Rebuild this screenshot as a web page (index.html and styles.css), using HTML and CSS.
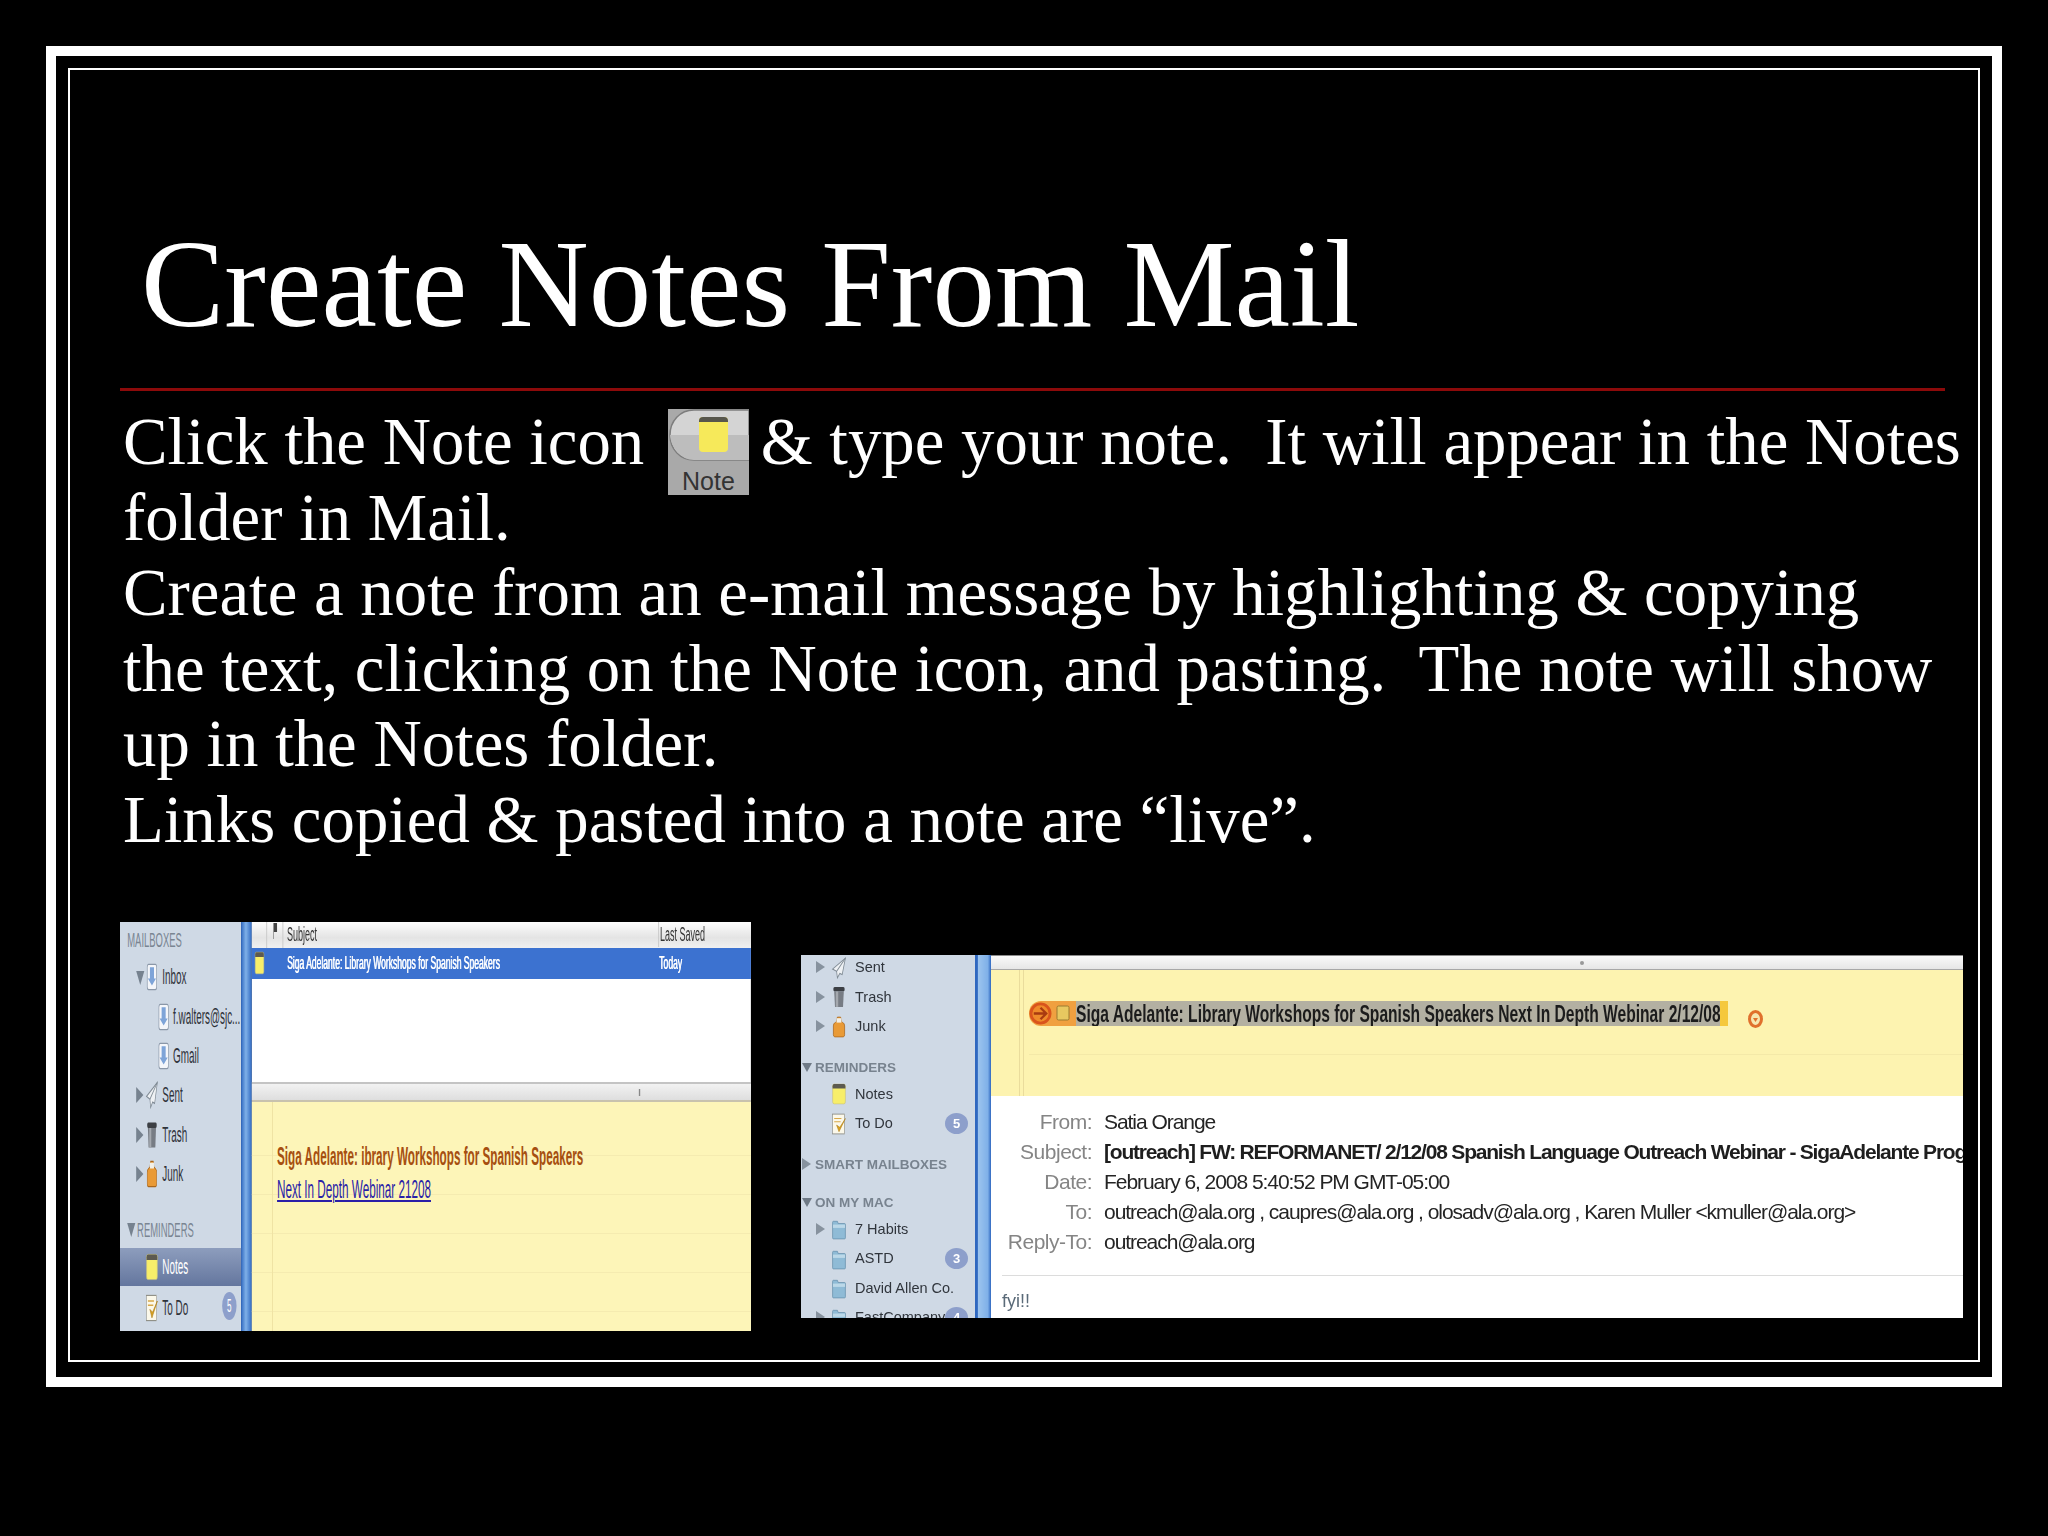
FILE: index.html
```html
<!DOCTYPE html>
<html lang="en">
<head>
    <meta charset="UTF-8">
    <title>Create Notes From Mail</title>
    <link rel="stylesheet" href="styles.css">
</head>
<body>
    <!-- Shared mail sidebar icons -->
    <svg class="icon-defs" aria-hidden="true">
        <defs>
            <symbol id="i-mail" viewBox="0 0 20 20" preserveAspectRatio="none">
                <rect x="3" y="1" width="14" height="18" rx="2" fill="#f4f6fa" stroke="#8a97a8"/>
                <path d="M7 3h6v8h3l-6 5-6-5h3z" fill="#7ea4d8"/>
            </symbol>
            <symbol id="i-sent" viewBox="0 0 20 20" preserveAspectRatio="none">
                <path d="M18 1 2 11l5 2 1 6 3-4 3 1z" fill="#eef1f4" stroke="#7f8a94" stroke-width="1"/>
                <path d="M18 1 7 13" stroke="#7f8a94" fill="none"/>
            </symbol>
            <symbol id="i-trash" viewBox="0 0 20 20" preserveAspectRatio="none">
                <rect x="3" y="1" width="14" height="4" rx="1.5" fill="#3c3f44"/>
                <path d="M4 5h12l-1 14H5z" fill="#777c84"/>
                <path d="M6 5v14h3V5z" fill="#a4a8ae"/>
            </symbol>
            <symbol id="i-junk" viewBox="0 0 20 20" preserveAspectRatio="none">
                <path d="M3 9c0-3 3-3 4-4l1-4h4l1 4c1 1 4 1 4 4v8c0 2-2 2-2 2H5s-2 0-2-2z" fill="#e99a36" stroke="#a9661c" stroke-width=".8"/>
                <path d="M7 2h6v4H7z" fill="#f2f0e8"/>
            </symbol>
            <symbol id="i-note" viewBox="0 0 20 20" preserveAspectRatio="none">
                <rect x="2" y="1" width="16" height="18" rx="2" fill="#f7ee6a" stroke="#c4bd82" stroke-width=".6"/>
                <path d="M2 3a2 2 0 0 1 2-2h12a2 2 0 0 1 2 2v2H2z" fill="#5c5a50"/>
            </symbol>
            <symbol id="i-todo" viewBox="0 0 20 20" preserveAspectRatio="none">
                <rect x="2" y="1" width="15" height="18" fill="#fbf8ea" stroke="#8d8d85" stroke-width=".8"/>
                <path d="M4 5h9M4 8h8" stroke="#d8a84a"/>
                <path d="M7 11l3 6 8-12-7 8z" fill="#d9a21f" stroke="#b0801a" stroke-width=".6"/>
            </symbol>
            <symbol id="i-folder" viewBox="0 0 20 20" preserveAspectRatio="none">
                <path d="M2 4a1 1 0 0 1 1-1h5l1 2h8a1 1 0 0 1 1 1v12a1 1 0 0 1-1 1H3a1 1 0 0 1-1-1z" fill="#8fbbd6" stroke="#5f8aa6" stroke-width=".7"/>
                <path d="M2.500 6h15v3h-15z" fill="#bcd8e8"/>
            </symbol>
        </defs>
    </svg>

    <div class="frame">
        <div class="frame-inner">
            <h1 class="title">Create Notes From Mail</h1>
            <div class="rule"></div>

            <p class="body-text">Click the Note icon <span class="note-btn"><svg class="note-btn-art" viewBox="0 0 81 54"><path d="M81 1H26C12 1 2 12 2 26s10 25 24 25h55z" fill="#d4d4d4" stroke="#7d7d7d" stroke-width="1.5"/><path d="M81 26H2c1 13 11 25 24 25h55z" fill="#bdbdbd"/><rect x="31" y="8" width="29" height="35" rx="4" fill="#f6e95a"/><path d="M31 12a4 4 0 0 1 4-4h21a4 4 0 0 1 4 4v1H31z" fill="#57564c"/></svg><span class="note-btn-label">Note</span></span> &amp; type your note.  It will appear in the Notes
folder in Mail.
Create a note from an e-mail message by highlighting &amp; copying
the text, clicking on the Note icon, and pasting.  The note will show
up in the Notes folder.
Links copied &amp; pasted into a note are “live”.</p>

            <div class="shots">
                <!-- Left capture, squeezed sideways like the original -->
                <div class="shot shot-a">
                    <div class="shot-a-inner">
                        <div class="side-a">
                            <div class="sec-a first">MAILBOXES</div>
                            <div class="row-a"><i class="tri-a open"></i><svg class="ico-a"><use href="#i-mail"/></svg>Inbox</div>
                            <div class="row-a sub"><svg class="ico-a"><use href="#i-mail"/></svg>f.walters@sjc...</div>
                            <div class="row-a sub"><svg class="ico-a"><use href="#i-mail"/></svg>Gmail</div>
                            <div class="row-a"><i class="tri-a"></i><svg class="ico-a"><use href="#i-sent"/></svg>Sent</div>
                            <div class="row-a"><i class="tri-a"></i><svg class="ico-a"><use href="#i-trash"/></svg>Trash</div>
                            <div class="row-a"><i class="tri-a"></i><svg class="ico-a"><use href="#i-junk"/></svg>Junk</div>
                            <div class="sec-a"><i class="tri-a open head"></i>REMINDERS</div>
                            <div class="row-a selected"><svg class="ico-a"><use href="#i-note"/></svg>Notes</div>
                            <div class="row-a"><svg class="ico-a"><use href="#i-todo"/></svg>To Do<span class="badge-a">5</span></div>
                        </div>
                        <div class="splitter-a"></div>
                        <div class="main-a">
                            <div class="list-head">
                                <span class="col-flag"><svg class="flag" viewBox="0 0 10 16"><path d="M1 0h8v9H2v7H1z" fill="#444"/></svg></span>
                                <span class="col-subject">Subject</span>
                                <span class="col-saved">Last Saved</span>
                            </div>
                            <div class="list-row">
                                <svg class="list-note"><use href="#i-note"/></svg>
                                <span class="col-subject">Siga Adelante: Library Workshops for Spanish Speakers</span>
                                <span class="col-saved">Today</span>
                            </div>
                            <div class="list-empty"></div>
                            <div class="divider-a"><i class="dimple"></i></div>
                            <div class="note-a">
                                <div class="note-a-title">Siga Adelante: ibrary Workshops for Spanish Speakers</div>
                                <a class="note-a-link">Next In Depth Webinar 21208</a>
                            </div>
                        </div>
                    </div>
                </div>

                <!-- Right capture -->
                <div class="shot shot-b">
                    <div class="side-b">
                        <div class="row-b"><i class="tri-b"></i><svg class="ico-b"><use href="#i-sent"/></svg>Sent</div>
                        <div class="row-b"><i class="tri-b"></i><svg class="ico-b"><use href="#i-trash"/></svg>Trash</div>
                        <div class="row-b"><i class="tri-b"></i><svg class="ico-b"><use href="#i-junk"/></svg>Junk</div>
                        <div class="sec-b gap"><i class="tri-b open"></i>REMINDERS</div>
                        <div class="row-b"><svg class="ico-b"><use href="#i-note"/></svg>Notes</div>
                        <div class="row-b"><svg class="ico-b"><use href="#i-todo"/></svg>To Do<span class="badge-b">5</span></div>
                        <div class="sec-b gap"><i class="tri-b"></i>SMART MAILBOXES</div>
                        <div class="sec-b gap-small"><i class="tri-b open"></i>ON MY MAC</div>
                        <div class="row-b"><i class="tri-b"></i><svg class="ico-b"><use href="#i-folder"/></svg>7 Habits</div>
                        <div class="row-b"><svg class="ico-b"><use href="#i-folder"/></svg>ASTD<span class="badge-b">3</span></div>
                        <div class="row-b"><svg class="ico-b"><use href="#i-folder"/></svg>David Allen Co.</div>
                        <div class="row-b"><i class="tri-b"></i><svg class="ico-b"><use href="#i-folder"/></svg>FastCompany<span class="badge-b">4</span></div>
                    </div>
                    <div class="splitter-b"></div>
                    <div class="main-b">
                        <div class="bar-b"><i class="dimple-b"></i></div>
                        <div class="note-b">
                            <div class="banner">
                                <span class="banner-lead">
                                    <svg class="banner-arrow" viewBox="0 0 24 24"><circle cx="12" cy="12" r="10" fill="#ef8a2a" stroke="#d9541c" stroke-width="3"/><path d="M5 12h12M12 6l6 6-6 6" fill="none" stroke="#a83a10" stroke-width="2.4"/></svg>
                                    <svg class="banner-note" viewBox="0 0 14 16"><rect x="1" y="1" width="12" height="14" rx="1.5" fill="#e8c860" stroke="#9a7a30"/></svg>
                                </span>
                                <span class="banner-text"><span class="banner-squeeze">Siga Adelante: Library Workshops for Spanish Speakers Next In Depth Webinar 2/12/08</span></span>
                                <i class="banner-tail"></i>
                            </div>
                            <svg class="banner-end" viewBox="0 0 15 18"><ellipse cx="7.500" cy="9" rx="6" ry="7.500" fill="#f6e7b0" stroke="#e0702c" stroke-width="3"/><path d="M5 8h5l-2.500 4z" fill="#e0702c"/></svg>
                        </div>
                        <div class="mail-head">
                            <div class="field"><span class="label">From:</span><span class="value">Satia Orange</span></div>
                            <div class="field"><span class="label">Subject:</span><span class="value strong">[outreach] FW: REFORMANET/ 2/12/08 Spanish Language Outreach Webinar - SigaAdelante Program</span></div>
                            <div class="field"><span class="label">Date:</span><span class="value">February 6, 2008 5:40:52 PM GMT-05:00</span></div>
                            <div class="field"><span class="label">To:</span><span class="value">outreach@ala.org , caupres@ala.org , olosadv@ala.org , Karen Muller &lt;kmuller@ala.org&gt;</span></div>
                            <div class="field"><span class="label">Reply-To:</span><span class="value">outreach@ala.org</span></div>
                        </div>
                        <div class="mail-body">fyi!!</div>
                    </div>
                </div>
            </div>
        </div>
    </div>
</body>
</html>
```

FILE: styles.css
```css
html, body {
    margin: 0;
    padding: 0;
    background: #000;
}

body {
    width: 2048px;
    height: 1536px;
    overflow: hidden;
    padding: 46px;
    box-sizing: border-box;
    font-family: "Liberation Serif", serif;
    color: #fff;
}

.icon-defs {
    position: absolute;
    width: 0;
    height: 0;
}

.frame {
    width: 1956px;
    height: 1341px;
    box-sizing: border-box;
    border: 10px solid #fff;
    padding: 12px;
}

.frame-inner {
    height: 1294px;
    box-sizing: border-box;
    border: 2px solid #fff;
    padding: 149px 0 0 50px;
}

.title {
    margin: 0 0 0 21px;
    font-size: 125px;
    font-weight: 400;
    line-height: 130px;
}

.rule {
    width: 1825px;
    height: 3px;
    margin-top: 39px;
    background: #8c0a0a;
}

.body-text {
    margin: 13px 0 0 3px;
    font-size: 66.8px;
    line-height: 75.6px;
    white-space: pre;
}

/* Note toolbar button sits inside the first text line */
.note-btn {
    display: inline-block;
    width: 81px;
    height: 86px;
    margin: -30px -5px -30px 7px;
    background: #a9a9a9;
    vertical-align: -1px;
    overflow: hidden;
}

.note-btn-art {
    width: 81px;
    height: 54px;
    display: block;
}

.note-btn-label {
    display: block;
    margin-top: 3px;
    font-family: "Liberation Sans", sans-serif;
    font-size: 25px;
    line-height: 30px;
    text-align: center;
    color: #333;
}

.shots {
    display: flex;
    align-items: flex-start;
    margin-top: 64px;
    gap: 50px;
}

.shot {
    overflow: hidden;
    font-family: "Liberation Sans", sans-serif;
    filter: blur(0.5px);
}

/* shot a: laid out wide, then squeezed to 45% */
.shot-a {
    width: 631px;
    height: 409px;
    flex: none;
}

.shot-a-inner {
    display: flex;
    width: 1402px;
    height: 409px;
    transform: scaleX(0.45);
    transform-origin: left top;
}

.side-a {
    width: 269px;
    flex: none;
    background: #cfd9e5;
    color: #2f333a;
    font-size: 22px;
}

.sec-a {
    display: flex;
    align-items: center;
    height: 36px;
    margin-top: 18px;
    font-size: 21px;
    color: #7a8592;
}

.sec-a.first {
    height: 36px;
    margin: 0;
    padding-left: 16px;
}

.row-a {
    display: flex;
    align-items: center;
    position: relative;
    height: 39.4px;
    padding-left: 94px;
}

.row-a.sub {
    padding-left: 118px;
}

.row-a.selected {
    height: 38px;
    background: linear-gradient(#8d9dbd, #64769e);
    color: #fff;
}

.row-a.selected + .row-a {
    height: 44px;
}

.ico-a {
    position: absolute;
    top: 50%;
    left: 56px;
    width: 30px;
    height: 28px;
    margin-top: -14px;
}

.row-a.sub .ico-a {
    left: 82px;
}

.tri-a {
    position: absolute;
    left: 36px;
    top: 50%;
    margin-top: -8px;
    border-left: 16px solid #76828f;
    border-top: 8px solid transparent;
    border-bottom: 8px solid transparent;
}

.tri-a.open {
    margin-top: -6px;
    border-top: 14px solid #76828f;
    border-left: 9px solid transparent;
    border-right: 9px solid transparent;
    border-bottom: 0;
}

.tri-a.head {
    position: static;
    margin: 0 4px 0 16px;
}

.badge-a {
    position: absolute;
    left: 227px;
    top: 6px;
    width: 32px;
    height: 28px;
    border-radius: 50%;
    background: #8d9fcb;
    color: #fff;
    font-size: 18px;
    line-height: 28px;
    text-align: center;
}

.splitter-a {
    width: 24px;
    flex: none;
    background: linear-gradient(90deg, #2f68c0, #7fb0e8 45%, #2f68c0);
}

.main-a {
    flex: 1;
    display: flex;
    flex-direction: column;
    background: #fff;
    color: #333;
    font-size: 19px;
}

.list-head, .list-row {
    position: relative;
    display: flex;
    align-items: center;
}

.list-head {
    height: 26px;
    background: linear-gradient(#fdfdfd, #e4e4e4 60%, #f0f0f0);
}

.list-row {
    height: 31px;
    background: #3c72d0;
    color: #fff;
    text-shadow: 1px 0 0 #fff;
}

.col-flag {
    position: absolute;
    left: 32px;
    top: 0;
    width: 38px;
    height: 26px;
    border-left: 2px solid #c8c8c8;
    border-right: 2px solid #c8c8c8;
    box-sizing: border-box;
}

.flag {
    display: block;
    width: 22px;
    height: 16px;
    margin: 1px 0 0 7px;
}

.col-subject {
    position: absolute;
    left: 78px;
}

.col-saved {
    position: absolute;
    left: 903px;
    padding-left: 2px;
}

.list-head .col-subject, .list-head .col-saved {
    top: -1px;
    font-size: 20px;
    line-height: 26px;
}

.list-head .col-saved {
    border-left: 2px solid #c8c8c8;
}

.list-note {
    position: absolute;
    left: 5px;
    top: 3px;
    width: 24px;
    height: 24px;
}

.list-empty {
    height: 103px;
}

.divider-a {
    position: relative;
    height: 20px;
    border-top: 2px solid #c4c4c4;
    border-bottom: 2px solid #c8c2ae;
    box-sizing: border-box;
    background: linear-gradient(#f2f2f2, #dedede);
}

.dimple {
    position: absolute;
    left: 860px;
    top: 5px;
    width: 3px;
    height: 7px;
    background: #888;
}

/* yellow legal pad with ruled lines */
.note-a {
    flex: 1;
    padding: 38px 0 0 56px;
    background-color: #fdf5b8;
    background-image:
        linear-gradient(90deg, transparent 44px, #efe3a4 44px, #efe3a4 46px, transparent 46px),
        repeating-linear-gradient(transparent 0, transparent 38px, #f5ebb0 38px, #f5ebb0 39px);
    background-position: 0 0, 0 15px;
}

.note-a-title {
    font-size: 26px;
    font-weight: 700;
    line-height: 32px;
    color: #a64f10;
    white-space: nowrap;
}

.note-a-link {
    display: inline-block;
    margin-top: 2px;
    font-size: 26px;
    line-height: 31px;
    color: #2a1fa8;
    text-decoration: underline;
    white-space: nowrap;
}

/* shot b */
.shot-b {
    display: flex;
    width: 1162px;
    height: 363px;
    margin-top: 33px;
    flex: none;
}

.side-b {
    width: 174px;
    height: 363px;
    flex: none;
    overflow: hidden;
    background: #cfd9e5;
    color: #30353c;
    font-size: 14.5px;
}

.row-b {
    position: relative;
    display: flex;
    align-items: center;
    height: 29.5px;
    padding-left: 54px;
    white-space: nowrap;
}

.row-b:first-child {
    margin-top: -2px;
}

.sec-b {
    position: relative;
    display: flex;
    align-items: center;
    height: 24px;
    padding-left: 14px;
    font-size: 13.5px;
    font-weight: 700;
    color: #78838f;
    white-space: nowrap;
}

.sec-b.gap {
    margin-top: 14px;
}

.sec-b.gap-small {
    margin-top: 14px;
}

.ico-b {
    position: absolute;
    left: 30px;
    top: 4px;
    width: 16px;
    height: 22px;
}

.tri-b {
    position: absolute;
    left: 15px;
    top: 50%;
    margin-top: -6px;
    border-left: 9px solid #87929e;
    border-top: 6px solid transparent;
    border-bottom: 6px solid transparent;
}

.sec-b .tri-b {
    left: 1px;
}

.tri-b.open {
    margin-top: -4px;
    border-top: 9px solid #6f7a86;
    border-left: 5px solid transparent;
    border-right: 5px solid transparent;
    border-bottom: 0;
}

.badge-b {
    position: absolute;
    left: 144px;
    top: 4px;
    width: 23px;
    height: 21px;
    border-radius: 50%;
    background: #8d9fcb;
    color: #fff;
    font-size: 13px;
    font-weight: 700;
    line-height: 21px;
    text-align: center;
}

.splitter-b {
    width: 16px;
    flex: none;
    background: linear-gradient(90deg, #2f68c0 15%, #9cc4ee 20%, #7fb0e8 80%, #2f68c0);
}

.main-b {
    flex: 1;
    min-width: 0;
    display: flex;
    flex-direction: column;
    background: #fff;
}

.bar-b {
    position: relative;
    height: 15px;
    box-sizing: border-box;
    border-top: 1px solid #8a8a8a;
    border-bottom: 1px solid #a8a8a8;
    background: linear-gradient(#fafafa, #e6e6e6);
}

.dimple-b {
    position: absolute;
    left: 589px;
    top: 5px;
    width: 4px;
    height: 4px;
    border-radius: 50%;
    background: #999;
}

.note-b {
    position: relative;
    height: 126px;
    background-color: #fdf3b0;
    background-image:
        linear-gradient(90deg, transparent 28px, #eadc9c 28px, #eadc9c 29px, transparent 29px, transparent 32px, #eadc9c 32px, #eadc9c 33px, transparent 33px),
        linear-gradient(#f4e9a8, #f4e9a8);
    background-size: 100% 100%, 100% 1px;
    background-position: 0 0, 38px 84px;
    background-repeat: no-repeat;
}

.banner {
    position: absolute;
    left: 38px;
    top: 31px;
    display: flex;
    align-items: stretch;
    height: 25px;
}

.banner-lead {
    display: flex;
    align-items: center;
    gap: 4px;
    width: 47px;
    background: #f0a040;
    border-radius: 12px 0 0 12px;
}

.banner-arrow {
    width: 23px;
    height: 23px;
    flex: none;
}

.banner-note {
    width: 14px;
    height: 18px;
    flex: none;
}

.banner-text {
    width: 644px;
    overflow: hidden;
    background: #b3b0a2;
}

.banner-squeeze {
    display: inline-block;
    font-size: 24px;
    font-weight: 700;
    line-height: 25px;
    color: #1c1c1c;
    white-space: nowrap;
    transform: scaleX(0.65);
    transform-origin: left center;
}

.banner-tail {
    width: 8px;
    background: #f5c83c;
}

.banner-end {
    position: absolute;
    left: 757px;
    top: 40px;
    width: 15px;
    height: 18px;
}

.mail-head {
    height: 180px;
    padding-top: 11px;
    box-sizing: border-box;
    border-bottom: 1px solid #dcdcdc;
    margin-left: 11px;
    overflow: hidden;
}

.field {
    display: flex;
    height: 30px;
    align-items: center;
    font-size: 21px;
    white-space: nowrap;
}

.label {
    width: 90px;
    margin-right: 12px;
    flex: none;
    text-align: right;
    letter-spacing: -0.5px;
    color: #858585;
}

.value {
    color: #242424;
    letter-spacing: -1.05px;
}

.value.strong {
    font-weight: 700;
    letter-spacing: -1.2px;
    color: #1e1e1e;
}

.mail-body {
    margin: 15px 0 0 11px;
    font-size: 18px;
    color: #5a6a78;
}
```
